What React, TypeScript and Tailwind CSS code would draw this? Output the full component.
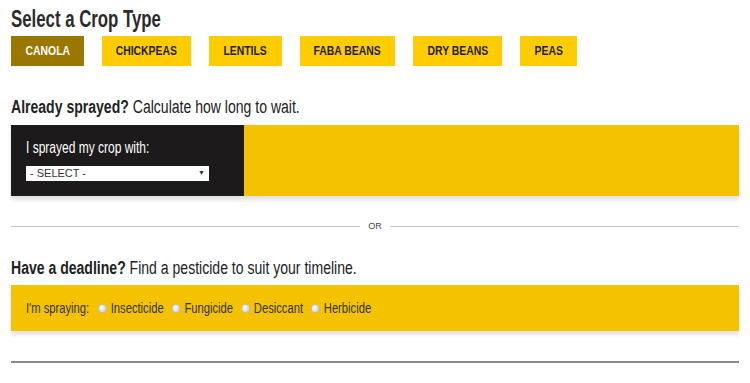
const crops = [
  { name: "Canola", w: "w-[73px]" },
  { name: "Chickpeas", w: "w-[89px]" },
  { name: "Lentils", w: "w-[73px]" },
  { name: "Faba Beans", w: "w-[95px]" },
  { name: "Dry Beans", w: "w-[89px]" },
  { name: "Peas", w: "w-[57px]" },
];
const kinds = ["Insecticide", "Fungicide", "Desiccant", "Herbicide"];

const font = { fontFamily: '"Liberation Sans", Arial, sans-serif' };

export default function App() {
  return (
    <div className="w-[750px] h-[383px] overflow-hidden bg-white text-[#222]" style={font}>
      <div className="px-[11px] pt-[6px]">
        <h1 className="h-[26px] text-[23px] font-bold leading-[26px] text-[#2b2b2b] whitespace-nowrap">
          <span className="inline-block origin-left scale-x-[0.73]">Select a Crop Type</span>
        </h1>

        <div className="flex gap-[18px] mt-[4px]">
          {crops.map((c, i) => (
            <button
              key={c.name}
              className={
                (i === 0 ? "bg-[#9a7800] text-white " : "bg-[#ffcc00] text-[#1e1e1e] ") +
                c.w +
                " h-[30px] flex items-center justify-center text-[13px] font-bold uppercase whitespace-nowrap"
              }
            >
              <span className="inline-block scale-x-[0.8]">{c.name}</span>
            </button>
          ))}
        </div>

        <p className="mt-[30px] h-[22px] text-[18px] leading-[22px] text-[#222] whitespace-nowrap">
          <span className="inline-block origin-left scale-x-[0.78]">
            <span className="font-bold">Already sprayed?</span> Calculate how long to wait.
          </span>
        </p>

        <div className="mt-[7px] flex h-[71px] shadow-[0_4px_4px_rgba(0,0,0,0.12)]">
          <div className="w-[233px] bg-[#1c1a1a] px-[15px] pt-[13px]">
            <div className="text-white text-[16px] leading-[20px] whitespace-nowrap">
              <span className="inline-block origin-left scale-x-[0.75]">I sprayed my crop with:</span>
            </div>
            <div className="mt-[8px] w-[183px] h-[15px] bg-white flex items-center justify-between pl-[4px] pr-[4px] text-[11px] text-[#333]">
              <span>- SELECT -</span>
              <span className="text-[7px]">▼</span>
            </div>
          </div>
          <div className="flex-1 bg-[#f5c200]" />
        </div>

        <div className="mt-[25px] flex items-center gap-[8px]">
          <div className="flex-1 h-px bg-[#c8c8c8]" />
          <span className="text-[9px] leading-[10px] text-[#444]">OR</span>
          <div className="flex-1 h-px bg-[#c8c8c8]" />
        </div>

        <p className="mt-[26px] h-[22px] text-[18px] leading-[22px] text-[#222] whitespace-nowrap">
          <span className="inline-block origin-left scale-x-[0.78]">
            <span className="font-bold">Have a deadline?</span> Find a pesticide to suit your timeline.
          </span>
        </p>

        <div className="mt-[6px] h-[46px] bg-[#f5c200] flex items-center px-[15px] shadow-[0_4px_4px_rgba(0,0,0,0.12)]">
          <div className="flex items-center gap-[10px] origin-left scale-x-[0.8] text-[14px] text-[#333] whitespace-nowrap">
            <span className="mr-[1px]">I'm spraying:</span>
            {kinds.map((k) => (
              <label key={k} className="flex items-center gap-[5px]">
                <span className="w-[11px] h-[9px] rounded-full bg-[radial-gradient(circle_at_40%_35%,#ffffff,#c4c4c4)] border border-[#bdbdbd]" />
                <span>{k}</span>
              </label>
            ))}
          </div>
        </div>

        <div className="mt-[30px] h-[2px] bg-[#8a8a8a]" />
      </div>
    </div>
  );
}
